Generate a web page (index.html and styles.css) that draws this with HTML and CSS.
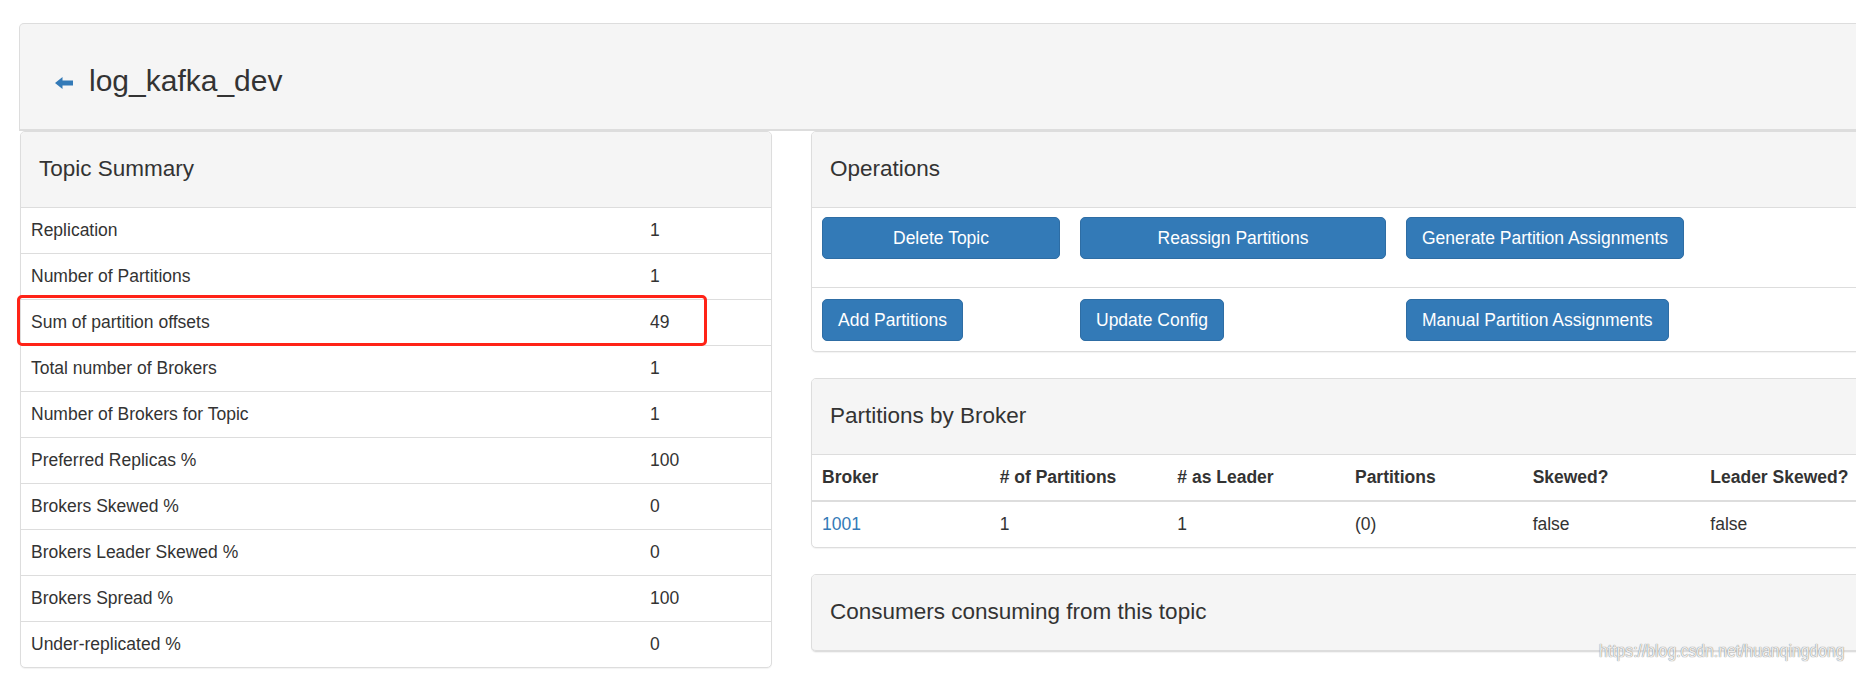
FILE: index.html
```html
<!DOCTYPE html>
<html lang="en">
<head>
<meta charset="utf-8">
<title>log_kafka_dev</title>
<link rel="stylesheet" href="styles.css">
</head>
<body>
<div class="page">
  <div class="topbar">
    <h3 class="topic-title">
      <a class="back" href="#"><svg class="back-icon" viewBox="0 0 18 12" width="18" height="12"><path d="M0 6 L7.5 0 V3.5 H18 V8.5 H7.5 V12 Z" fill="#337ab7"/></svg></a>
      <span>log_kafka_dev</span>
    </h3>
  </div>

  <div class="columns">
    <div class="col-left">
      <div class="panel summary">
        <div class="panel-heading"><h4 class="panel-title">Topic Summary</h4></div>
        <table class="kv">
          <tr><td class="k">Replication</td><td>1</td></tr>
          <tr><td class="k">Number of Partitions</td><td>1</td></tr>
          <tr><td class="k">Sum of partition offsets</td><td>49</td></tr>
          <tr><td class="k">Total number of Brokers</td><td>1</td></tr>
          <tr><td class="k">Number of Brokers for Topic</td><td>1</td></tr>
          <tr><td class="k">Preferred Replicas %</td><td>100</td></tr>
          <tr><td class="k">Brokers Skewed %</td><td>0</td></tr>
          <tr><td class="k">Brokers Leader Skewed %</td><td>0</td></tr>
          <tr><td class="k">Brokers Spread %</td><td>100</td></tr>
          <tr><td class="k">Under-replicated %</td><td>0</td></tr>
        </table>
        <div class="highlight"></div>
      </div>
    </div>

    <div class="col-right">
      <div class="panel">
        <div class="panel-heading"><h4 class="panel-title">Operations</h4></div>
        <table class="ops">
          <colgroup><col class="ops-c1"><col class="ops-c2"><col></colgroup>
          <tr class="ops-first">
            <td><button class="btn btn-fill">Delete Topic</button></td>
            <td><button class="btn btn-fill">Reassign Partitions</button></td>
            <td><button class="btn">Generate Partition Assignments</button></td>
          </tr>
          <tr class="ops-second">
            <td><button class="btn">Add Partitions</button></td>
            <td><button class="btn">Update Config</button></td>
            <td><button class="btn">Manual Partition Assignments</button></td>
          </tr>
        </table>
      </div>

      <div class="panel">
        <div class="panel-heading"><h4 class="panel-title">Partitions by Broker</h4></div>
        <table class="brokers">
          <thead>
            <tr><th>Broker</th><th># of Partitions</th><th># as Leader</th><th>Partitions</th><th>Skewed?</th><th>Leader Skewed?</th></tr>
          </thead>
          <tbody>
            <tr><td><a href="#">1001</a></td><td>1</td><td>1</td><td>(0)</td><td>false</td><td>false</td></tr>
          </tbody>
        </table>
      </div>

      <div class="panel">
        <div class="panel-heading heading-only"><h4 class="panel-title">Consumers consuming from this topic</h4></div>
      </div>
    </div>
  </div>
</div>
<div class="watermark">https://blog.csdn.net/huanqingdong</div>
</body>
</html>
```

FILE: styles.css
```css
html, body {
  margin: 0;
  padding: 0;
  overflow: hidden;
  background: #fff;
}

body {
  font-family: "Liberation Sans", Arial, Helvetica, sans-serif;
  font-size: 17.5px;
  line-height: 25px;
  color: #333;
  width: 1856px;
  height: 673px;
}

.page {
  padding: 23px 0 0 19px;
  width: 1900px;
}

/* top title bar */
.topbar {
  box-sizing: border-box;
  width: 1859px;
  height: 108px;
  background: #f5f5f5;
  border: 1px solid #ddd;
  border-bottom-width: 2px;
  border-radius: 5px 5px 0 0;
}

.topic-title {
  margin: 0;
  padding: 40px 0 0 35px;
  display: flex;
  align-items: center;
  gap: 16px;
  font-size: 30px;
  line-height: 33px;
  font-weight: normal;
  color: #333;
}

.back {
  display: flex;
  margin-top: 4px;
}

.back-icon {
  display: block;
}

/* columns */
.columns {
  display: grid;
  grid-template-columns: 752px 1068px;
  column-gap: 39px;
  align-items: start;
  margin-left: 1px;
}

/* panels */
.panel {
  position: relative;
  background: #fff;
  border: 1px solid #ddd;
  border-radius: 5px;
  box-shadow: 0 1px 1px rgba(0, 0, 0, 0.05);
  margin-bottom: 26px;
}

.panel-heading {
  box-sizing: content-box;
  height: 73px;
  padding: 0 18px 2px;
  display: flex;
  align-items: center;
  background: #f5f5f5;
  border-bottom: 1px solid #ddd;
  border-radius: 4px 4px 0 0;
}

.panel-title {
  margin: 0;
  font-size: 22.5px;
  line-height: 25px;
  font-weight: normal;
  color: #333;
}

/* key/value table */
.kv {
  width: 100%;
  border-collapse: collapse;
  table-layout: fixed;
}

.kv td {
  padding: 10px;
  line-height: 25px;
  border-top: 1px solid #ddd;
  vertical-align: top;
}

.kv tr:first-child td {
  border-top: 0;
}

.kv td.k {
  box-sizing: border-box;
  width: 619px;
}

.highlight {
  position: absolute;
  left: -4px;
  top: 163px;
  width: 690px;
  height: 51px;
  box-sizing: border-box;
  border: 3px solid #ff2317;
  border-radius: 5px;
  pointer-events: none;
}

/* operations table */
.ops {
  width: 100%;
  border-collapse: collapse;
  table-layout: fixed;
}

.ops-c1 { width: 258px; }
.ops-c2 { width: 326px; }

.ops td {
  vertical-align: top;
  padding: 9px 10px 28px;
}

.ops-second td {
  padding: 11px 10px 10px;
  border-top: 1px solid #ddd;
}

.btn {
  display: block;
  box-sizing: border-box;
  height: 42px;
  padding: 7.5px 15px;
  font-family: "Liberation Sans", Arial, Helvetica, sans-serif;
  font-size: 17.5px;
  line-height: 25px;
  color: #fff;
  background: #337ab7;
  border: 1px solid #2e6da4;
  border-radius: 5px;
  white-space: nowrap;
  width: max-content;
  cursor: pointer;
}

.btn-fill {
  width: 100%;
}

/* brokers table */
.brokers {
  width: 100%;
  border-collapse: collapse;
  table-layout: fixed;
}

.brokers th {
  text-align: left;
  font-weight: bold;
  padding: 10px;
  line-height: 25px;
  border-bottom: 2px solid #ddd;
}

.brokers td {
  padding: 10px;
  line-height: 25px;
}

.brokers a {
  color: #337ab7;
  text-decoration: none;
}

.heading-only {
  border-radius: 4px;
}

/* csdn watermark */
.watermark {
  position: absolute;
  left: 1599px;
  top: 640px;
  font-family: "Liberation Sans", Arial, sans-serif;
  font-size: 19px;
  line-height: 22px;
  color: rgba(255, 255, 255, 0.85);
  text-shadow: 0 0 1px #8a8a8a, 0 0 1px #8a8a8a;
  white-space: nowrap;
  transform: scaleX(0.83);
  transform-origin: left top;
}
```
